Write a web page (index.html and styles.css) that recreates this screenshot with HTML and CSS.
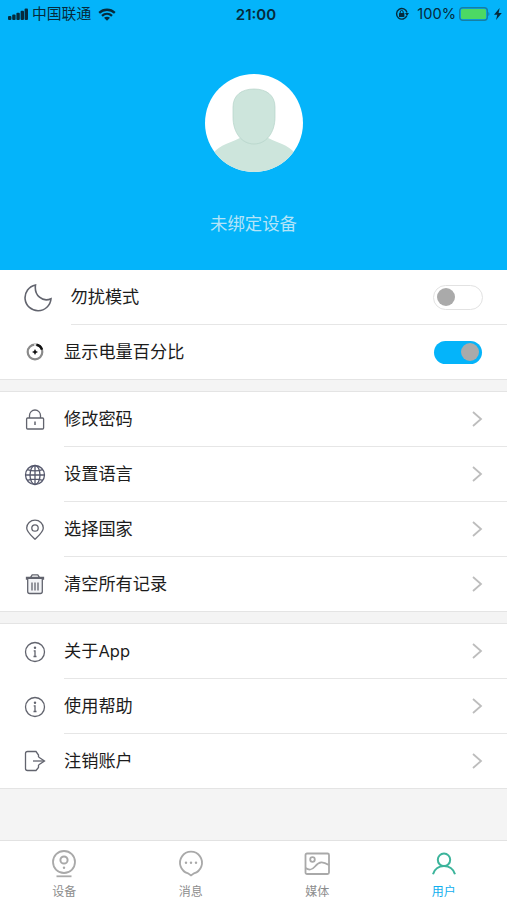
FILE: index.html
```html
<!DOCTYPE html>
<html lang="zh-CN">
<head>
  <meta charset="utf-8">
  <title>用户</title>
  <meta name="viewport" content="width=device-width, initial-scale=1">
  <link rel="stylesheet" href="styles.css">
</head>

<body>
  <div class="header">
    <div class="statusbar">
      <div class="status-left">
        <svg class="signal" width="20" height="12" viewBox="0 0 20 12">
          <rect x="0" y="8" width="3.4" height="4" rx="1"/>
          <rect x="4.2" y="6.5" width="3.4" height="5.5" rx="1"/>
          <rect x="8.4" y="4.8" width="3.4" height="7.2" rx="1"/>
          <rect x="12.6" y="2.8" width="3.4" height="9.2" rx="1"/>
          <rect x="16.6" y="0.5" width="3.4" height="11.5" rx="1"/>
        </svg>
        <span class="carrier">中国联通</span>
        <svg class="wifi" width="18" height="13" viewBox="0 0 18 13">
          <path d="M1.2 4.8C5.6.7 12.4.7 16.8 4.8M4 7.8c2.9-2.6 7.1-2.6 10 0" fill="none" stroke="#062b3c" stroke-width="2.3"/>
          <path d="M6 9.8c1.8-1.5 4.2-1.5 6 0l-3 3z"/>
        </svg>
      </div>
      <div class="clock">21:00</div>
      <div class="status-right">
        <svg width="14" height="14" viewBox="0 0 14 14">
          <path d="M11.8 8.8A5.3 5.3 0 1 1 12 5.5" fill="none" stroke="#062b3c" stroke-width="1.4"/>
          <path d="M10 6h4l-2 3z"/>
          <rect x="4" y="6" width="5.4" height="4" rx=".5"/>
          <path d="M5.2 6.2V5a1.5 1.5 0 0 1 3 0v1.2" fill="none" stroke="#062b3c"/>
        </svg>
        <span class="percent">100%</span>
        <svg width="31" height="14" viewBox="0 0 31 14">
          <rect x=".7" y=".7" width="27.6" height="12.6" rx="3" fill="none" stroke="#167fa3" stroke-width="1.4"/>
          <rect x="2" y="2" width="25" height="10" rx="1.5" fill="#4cd964"/>
          <path d="M29.3 5c1.5.5 1.5 3.5 0 4z" fill="#167fa3"/>
        </svg>
        <svg class="bolt" width="8" height="12" viewBox="0 0 8 12">
          <path d="M5.6 0L0 6.8h3.300L2 12l5.800-7H4.600z"/>
        </svg>
      </div>
    </div>
    <svg class="avatar" width="98" height="98" viewBox="0 0 98 98">
      <clipPath id="round"><circle cx="49" cy="49" r="49"/></clipPath>
      <circle cx="49" cy="49" r="49" fill="#fff"/>
      <g clip-path="url(#round)" fill="#cde5dc">
        <path d="M8 80c3-5 8-8 13-10 7-3 12-5 16-7h24c4 2 9 4 16 7 5 2 10 5 13 10v20H8z"/>
        <path d="M28 33c0-12 9-18 21-18s21 6 21 18v10c0 16-9 27-21 27S28 59 28 43z" stroke="#b5d3c9" stroke-width=".7"/>
      </g>
    </svg>
    <div class="device">未绑定设备</div>
  </div>

  <div class="group">
    <div class="row row-wide">
      <svg class="icon icon-moon" width="28" height="28" viewBox="0 0 28 28">
        <path d="M11.500 1A13 13 0 1 0 27 14.800C18.500 18.500 10 11.500 11.500 1z"/>
      </svg>
      <div class="cell"><span class="label">勿扰模式</span><i class="switch"></i></div>
    </div>
    <div class="row">
      <svg class="icon" width="22" height="22" viewBox="0 0 22 22">
        <circle cx="11" cy="11" r="7.300" stroke="#8a8a8a" stroke-width="2.200"/>
        <path d="M12.500 3.800a7.300 7.300 0 0 1 5.500 4.800" stroke="#111" stroke-width="2.400"/>
        <path d="M11 3v3" stroke="#fff"/>
        <path d="M11 8l1 2 2 1-2 1-1 2-1-2-2-1 2-1z" fill="#111" stroke="none"/>
      </svg>
      <div class="cell"><span class="label">显示电量百分比</span><i class="switch on"></i></div>
    </div>
  </div>

  <div class="group">
    <div class="row">
      <svg class="icon" width="22" height="22" viewBox="0 0 22 22">
        <rect x="2.600" y="9" width="17" height="11" rx="1"/>
        <path d="M5.500 9V6.500a5.500 5.500 0 0 1 11 0V9"/>
        <path d="M11 12.500v3.500" stroke-width="1.500"/>
      </svg>
      <div class="cell"><span class="label">修改密码</span><svg class="arrow" width="12" height="18" viewBox="0 0 12 18"><path d="M2 2l8 7-8 7"/></svg></div>
    </div>
    <div class="row">
      <svg class="icon globe" width="22" height="22" viewBox="0 0 22 22">
        <circle cx="11" cy="11" r="9.500"/>
        <ellipse cx="11" cy="11" rx="5" ry="9.500"/>
        <path d="M11 1.500v19M1.500 11h19M3.300 5.600c4.500 1.500 10.900 1.500 15.400 0M3.300 16.400c4.500-1.500 10.900-1.500 15.400 0"/>
      </svg>
      <div class="cell"><span class="label">设置语言</span><svg class="arrow" width="12" height="18" viewBox="0 0 12 18"><path d="M2 2l8 7-8 7"/></svg></div>
    </div>
    <div class="row">
      <svg class="icon" width="22" height="22" viewBox="0 0 22 22">
        <path d="M11 20.200C6 15.500 2.700 12.800 2.700 9a8.300 7.800 0 0 1 16.600 0c0 3.800-3.300 6.500-8.300 11.200z"/>
        <circle cx="11" cy="9" r="3.200"/>
      </svg>
      <div class="cell"><span class="label">选择国家</span><svg class="arrow" width="12" height="18" viewBox="0 0 12 18"><path d="M2 2l8 7-8 7"/></svg></div>
    </div>
    <div class="row">
      <svg class="icon" width="22" height="22" viewBox="0 0 22 22">
        <path d="M2.500 6V4.500h17V6zM6.500 4.300L8.200 1.800h5.600l1.700 2.500"/>
        <path d="M3.700 6v12.500q0 2 2 2h10.600q2 0 2-2V6" fill="#f3f4f7"/>
        <path d="M8 9.500v8M11 9.500v8M14 9.500v8"/>
      </svg>
      <div class="cell"><span class="label">清空所有记录</span><svg class="arrow" width="12" height="18" viewBox="0 0 12 18"><path d="M2 2l8 7-8 7"/></svg></div>
    </div>
  </div>

  <div class="group">
    <div class="row">
      <svg class="icon" width="22" height="22" viewBox="0 0 22 22">
        <circle cx="11" cy="11" r="9.500"/>
        <circle cx="11" cy="6.800" r="1.200" class="dot"/>
        <path d="M9.700 9.800H11v5.400M9.500 15.500h3"/>
      </svg>
      <div class="cell"><span class="label">关于<span class="latin">App</span></span><svg class="arrow" width="12" height="18" viewBox="0 0 12 18"><path d="M2 2l8 7-8 7"/></svg></div>
    </div>
    <div class="row">
      <svg class="icon" width="22" height="22" viewBox="0 0 22 22">
        <circle cx="11" cy="11" r="9.500"/>
        <circle cx="11" cy="6.800" r="1.200" class="dot"/>
        <path d="M9.700 9.800H11v5.400M9.500 15.500h3"/>
      </svg>
      <div class="cell"><span class="label">使用帮助</span><svg class="arrow" width="12" height="18" viewBox="0 0 12 18"><path d="M2 2l8 7-8 7"/></svg></div>
    </div>
    <div class="row">
      <svg class="icon" width="22" height="22" viewBox="0 0 22 22">
        <path d="M14.500 7V5L12 1.500H3.500q-2 0-2 2v15q0 2 2 2H12l2.500-3V15"/>
        <path d="M9 11h11"/>
        <path d="M14.500 7l6 4-6 4"/>
      </svg>
      <div class="cell"><span class="label">注销账户</span><svg class="arrow" width="12" height="18" viewBox="0 0 12 18"><path d="M2 2l8 7-8 7"/></svg></div>
    </div>
  </div>

  <div class="tabbar">
    <div class="tab">
      <svg width="30" height="30" viewBox="0 0 30 30">
        <circle cx="15" cy="13" r="11"/>
        <circle cx="15" cy="11" r="3.600" stroke-width="2"/>
        <circle cx="15" cy="18.700" r="1.200" class="dot"/>
        <path d="M7.500 27.300h15"/>
      </svg>
      <span>设备</span>
    </div>
    <div class="tab">
      <svg width="30" height="30" viewBox="0 0 30 30">
        <path d="M12 24.300A11 11 0 1 1 18 24.300L15 26.500z"/>
        <circle cx="10" cy="13.800" r="1.200" class="dot"/>
        <circle cx="15" cy="13.800" r="1.200" class="dot"/>
        <circle cx="20" cy="13.800" r="1.200" class="dot"/>
      </svg>
      <span>消息</span>
    </div>
    <div class="tab">
      <svg width="30" height="30" viewBox="0 0 30 30">
        <rect x="3.500" y="4.500" width="23.500" height="20.500" rx="1.500"/>
        <circle cx="10.500" cy="10.500" r="2.300"/>
        <path d="M3.500 19c4.500 3 7 1.500 9.500-1.500 4.500-5.500 8-5 14-1.500"/>
      </svg>
      <span>媒体</span>
    </div>
    <div class="tab active">
      <svg width="30" height="30" viewBox="0 0 30 30">
        <circle cx="15" cy="10.800" r="6.200"/>
        <path d="M4 25.200c3-11 19-11 22 0"/>
      </svg>
      <span>用户</span>
    </div>
  </div>
</body>

</html>
```

FILE: styles.css
```css
* {
  box-sizing: border-box;
}
body {
  margin: 0;
  height: 900px;
  display: flex;
  flex-direction: column;
  background-color: #f4f4f4;
  color: #1c1c1c;
  font-family: "Noto Sans CJK SC", sans-serif;
}
.header {
  height: 270px;
  display: flex;
  flex-direction: column;
  align-items: center;
  background-color: #04b4fa;
}
.statusbar {
  width: 100%;
  height: 28px;
  padding: 0 5px 0 8px;
  display: grid;
  grid-template-columns: 1fr auto 1fr;
  align-items: center;
  color: #062b3c;
  fill: #062b3c;
}
.status-left,
.status-right {
  display: flex;
  align-items: center;
}
.status-right {
  justify-content: flex-end;
}
.carrier {
  margin: 0 7px 2px 4px;
  font-size: 14.8px;
  line-height: 20px;
}
.clock {
  padding-left: 2px;
  font-family: Inter, sans-serif;
  font-size: 15px;
  font-weight: 600;
}
.percent {
  margin: 0 3px 0 8px;
  font-family: Inter, sans-serif;
  font-size: 14.6px;
}
.bolt {
  margin-left: 4px;
}
.avatar {
  margin-top: 46px;
}
.device {
  margin-top: 38px;
  font-size: 17.4px;
  line-height: 26px;
  color: #b4e4f8;
}
.group {
  margin-bottom: 11px;
  background-color: #fff;
  border-bottom: 1px solid #e4e4e4;
}
.group + .group {
  border-top: 1px solid #e4e4e4;
}
.row {
  height: 55px;
  padding-left: 24px;
  display: flex;
  align-items: center;
}
.row:last-child {
  height: 54px;
}
.icon {
  flex: none;
  margin-right: 18px;
  fill: none;
  stroke: #62646e;
  stroke-width: 1.3;
}
.icon-moon {
  stroke-width: 1.6;
}
.row-wide .icon {
  margin-right: 18.5px;
}
.globe {
  stroke: #55586c;
}
.icon .dot {
  fill: #62646e;
  stroke: none;
}
.cell {
  flex: 1;
  height: 100%;
  padding-right: 24px;
  display: flex;
  align-items: center;
  justify-content: space-between;
  border-bottom: 1px solid #e6e6e6;
  font-size: 17.2px;
}
.row:last-child .cell {
  border-bottom: 0;
}
.label {
  padding-bottom: 3px;
}
.latin {
  font-family: Inter, sans-serif;
  font-size: 16.5px;
}
.switch {
  width: 50px;
  height: 25px;
  padding: 2px;
  display: flex;
  align-items: center;
  border: 1.5px solid #e2e2e2;
  border-radius: 13px;
}
.switch::before {
  content: "";
  width: 18px;
  height: 18px;
  margin: 0 1px;
  border-radius: 50%;
  background-color: #aaa;
}
.switch.on {
  width: 48px;
  height: 23px;
  margin-right: 1px;
  justify-content: flex-end;
  border: 0;
  background-color: #04b4fa;
}
.arrow {
  fill: none;
  stroke: #bdbdbd;
  stroke-width: 1.8;
}
.tabbar {
  height: 60px;
  margin-top: auto;
  padding: 8px 0 0 1px;
  display: grid;
  grid-template-columns: repeat(4, 1fr);
  background-color: #fff;
  border-top: 1px solid #e2e2e2;
}
.tab {
  display: flex;
  flex-direction: column;
  align-items: center;
  font-size: 12px;
  line-height: 18px;
  color: #8d8d8d;
}
.tab svg {
  margin-bottom: 3px;
  fill: none;
  stroke: #a9a9a9;
  stroke-width: 1.8;
}
.tab .dot {
  fill: #a9a9a9;
  stroke: none;
}
.tab.active {
  color: #10aeee;
}
.tab.active svg {
  stroke: #3cb49b;
  stroke-width: 2;
}
```
